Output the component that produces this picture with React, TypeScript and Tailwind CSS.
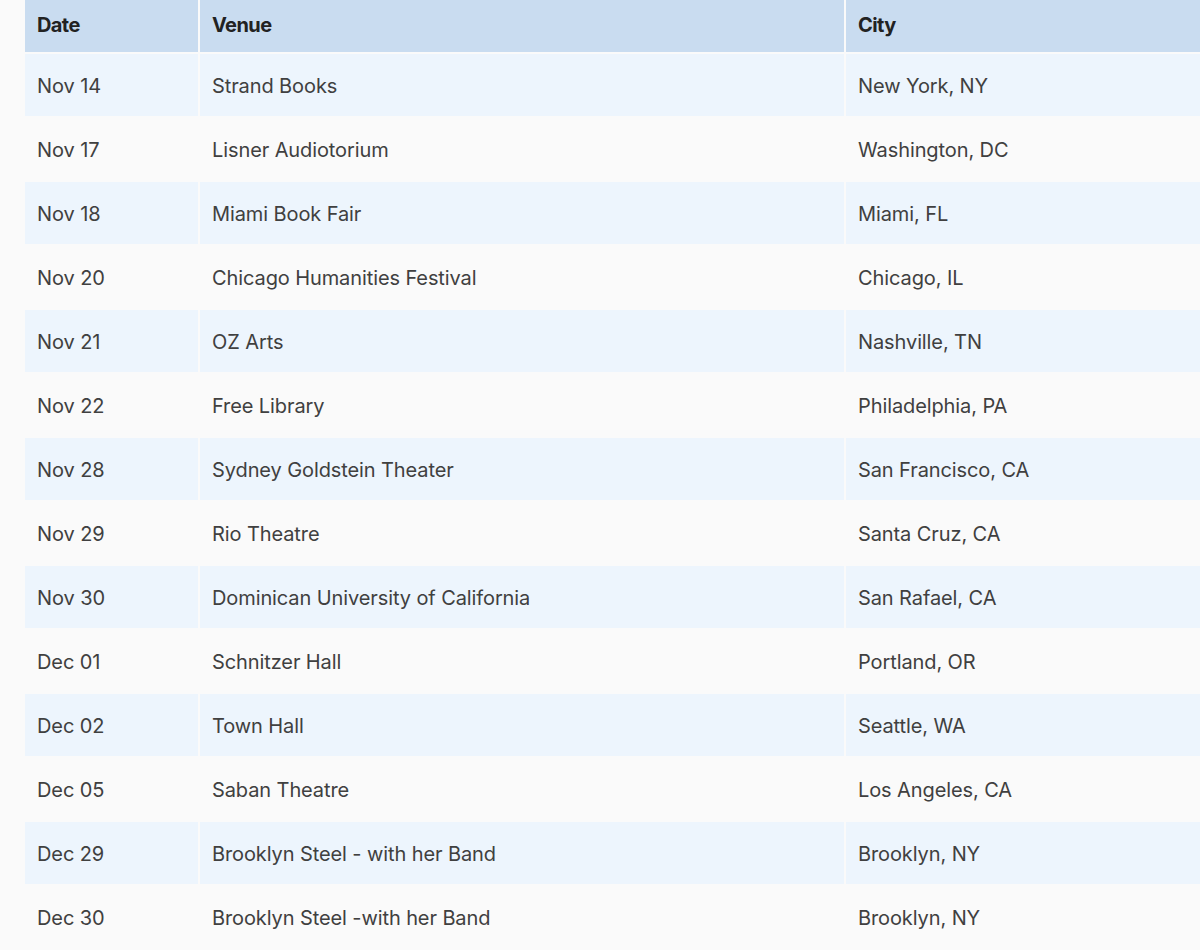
const shows = [
  { date: "Nov 14", venue: "Strand Books", city: "New York, NY" },
  { date: "Nov 17", venue: "Lisner Audiotorium", city: "Washington, DC" },
  { date: "Nov 18", venue: "Miami Book Fair", city: "Miami, FL" },
  { date: "Nov 20", venue: "Chicago Humanities Festival", city: "Chicago, IL" },
  { date: "Nov 21", venue: "OZ Arts", city: "Nashville, TN" },
  { date: "Nov 22", venue: "Free Library", city: "Philadelphia, PA" },
  { date: "Nov 28", venue: "Sydney Goldstein Theater", city: "San Francisco, CA" },
  { date: "Nov 29", venue: "Rio Theatre", city: "Santa Cruz, CA" },
  { date: "Nov 30", venue: "Dominican University of California", city: "San Rafael, CA" },
  { date: "Dec 01", venue: "Schnitzer Hall", city: "Portland, OR" },
  { date: "Dec 02", venue: "Town Hall", city: "Seattle, WA" },
  { date: "Dec 05", venue: "Saban Theatre", city: "Los Angeles, CA" },
  { date: "Dec 29", venue: "Brooklyn Steel - with her Band", city: "Brooklyn, NY" },
  { date: "Dec 30", venue: "Brooklyn Steel -with her Band", city: "Brooklyn, NY" },
];

export default function App() {
  return (
    <div className="min-h-screen overflow-hidden bg-[#fafafa] pl-[25px] font-['Inter','Liberation_Sans',sans-serif]">
      <div className="flex flex-col gap-[2px]">
        {/* Header */}
        <div className="grid h-[52px] grid-cols-[173px_644px_1fr] gap-[2px] text-[20px] font-bold tracking-[-0.03em] text-[#222]">
          <div className="flex items-center bg-[#c9dcf0] pb-[2px] pl-3">Date</div>
          <div className="flex items-center bg-[#c9dcf0] pb-[2px] pl-3">Venue</div>
          <div className="flex items-center bg-[#c9dcf0] pb-[2px] pl-3">City</div>
        </div>

        {shows.map((s, i) => {
          const bg = i % 2 === 0 ? "bg-[#edf5fd]" : "bg-[#fafafa]";
          return (
            <div
              key={s.date}
              className="grid h-[62px] grid-cols-[173px_644px_1fr] gap-[2px] text-[20px] tracking-[-0.005em] text-[#404040]"
            >
              <div className={`flex items-center pl-3 pt-[2px] ${bg}`}>{s.date}</div>
              <div className={`flex items-center pl-3 pt-[2px] ${bg}`}>{s.venue}</div>
              <div className={`flex items-center pl-3 pt-[2px] ${bg}`}>{s.city}</div>
            </div>
          );
        })}
      </div>
    </div>
  );
}
